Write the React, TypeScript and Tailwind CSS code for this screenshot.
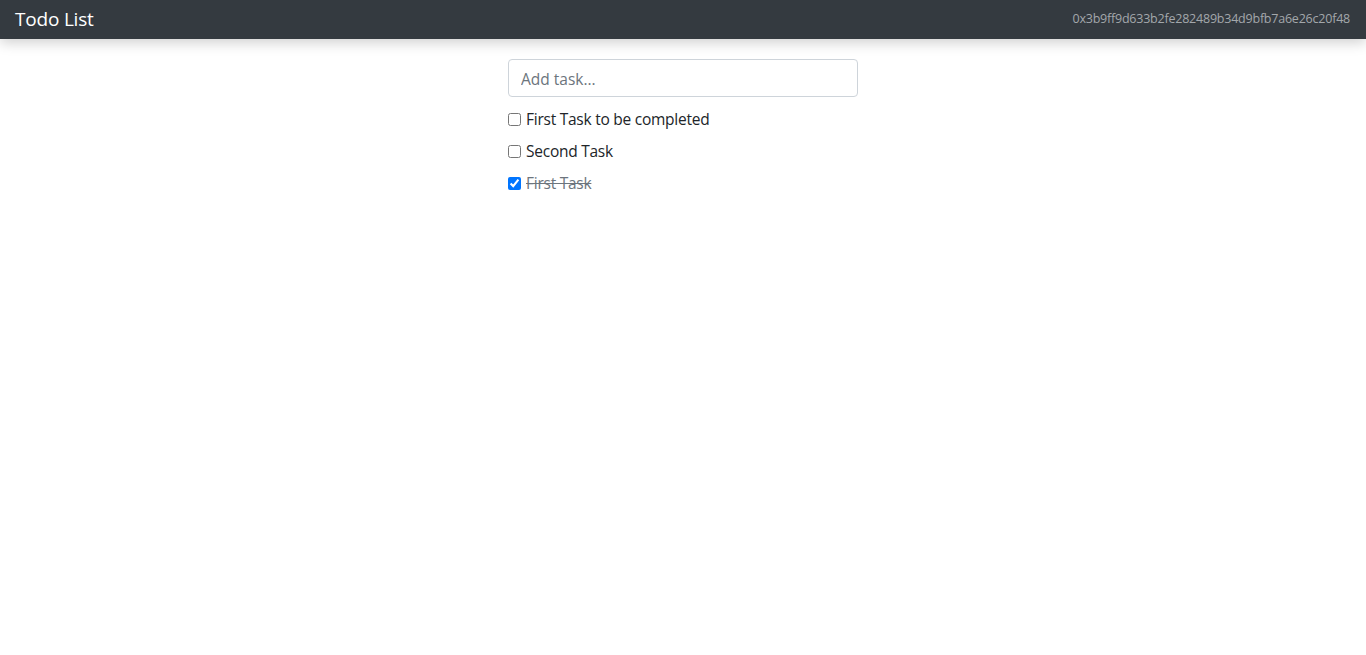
import { useState } from 'react';

interface Task {
  id: number;
  content: string;
  completed: boolean;
}

const initialTasks: Task[] = [
  { id: 1, content: 'First Task to be completed', completed: false },
  { id: 2, content: 'Second Task', completed: false },
  { id: 3, content: 'First Task', completed: true },
];

export default function App() {
  const [tasks, setTasks] = useState<Task[]>(initialTasks);
  const [text, setText] = useState('');

  function toggle(id: number) {
    setTasks((prev) => prev.map((t) => (t.id === id ? { ...t, completed: !t.completed } : t)));
  }

  function addTask(e: React.FormEvent) {
    e.preventDefault();
    if (!text.trim()) return;
    setTasks((prev) => [...prev, { id: Date.now(), content: text, completed: false }]);
    setText('');
  }

  return (
    <div className="min-h-screen bg-white font-['Open_Sans','Noto_Sans',sans-serif] text-[#212529]">
      <nav className="h-[39px] bg-[#343a40] flex items-center justify-between pl-[15px] pr-[16px] shadow-[0_4px_12px_rgba(0,0,0,0.18)]">
        <span className="text-white text-[19px] leading-none tracking-[-0.2px]">Todo List</span>
        <small className="text-[12.5px] text-[#a3a7ab] tracking-[-0.22px]">0x3b9ff9d633b2fe282489b34d9bfb7a6e26c20f48</small>
      </nav>

      <main className="w-[350px] mx-auto pt-5">
        <form onSubmit={addTask}>
          <input
            type="text"
            value={text}
            onChange={(e) => setText(e.target.value)}
            placeholder="Add task..."
            className="w-full h-[38px] px-3 pt-[2px] rounded border border-[#ced4da] text-[15.5px] placeholder:text-[#6c757d] focus:outline-none"
          />
        </form>
        <ul className="flex flex-col gap-2 pt-[11px]">
          {tasks.map((task) => (
            <li key={task.id} className="flex items-center h-6 text-[15.5px] tracking-[-0.25px]">
              <input
                type="checkbox"
                checked={task.completed}
                onChange={() => toggle(task.id)}
                className="w-[13px] h-[13px] mr-[5px] mb-[2px]"
              />
              <span className={task.completed ? 'line-through text-[#6c757d]' : ''}>{task.content}</span>
            </li>
          ))}
        </ul>
      </main>
    </div>
  );
}
